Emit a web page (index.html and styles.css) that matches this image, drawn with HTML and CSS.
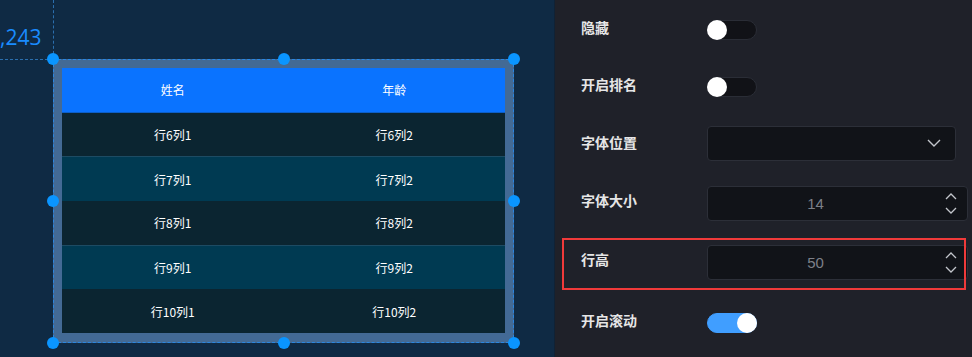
FILE: index.html
```html
<!DOCTYPE html>
<html lang="zh">
<head>
<meta charset="utf-8">
<link rel="stylesheet" href="styles.css">
</head>
<body>
<div class="app">
  <div class="canvas">
    <div class="guide-v"></div>
    <div class="guide-h"></div>
    <div class="coord">,243</div>
    <div class="widget">
      <div class="table">
        <div class="tr head"><div class="td">姓名</div><div class="td">年龄</div></div>
        <div class="tr dark"><div class="td">行6列1</div><div class="td">行6列2</div></div>
        <div class="tr light"><div class="td">行7列1</div><div class="td">行7列2</div></div>
        <div class="tr dark"><div class="td">行8列1</div><div class="td">行8列2</div></div>
        <div class="tr light"><div class="td">行9列1</div><div class="td">行9列2</div></div>
        <div class="tr dark"><div class="td">行10列1</div><div class="td">行10列2</div></div>
      </div>
      <span class="handle tl"></span><span class="handle tc"></span><span class="handle tr-h"></span>
      <span class="handle ml"></span><span class="handle mr"></span>
      <span class="handle bl"></span><span class="handle bc"></span><span class="handle br"></span>
    </div>
  </div>
  <div class="panel">
    <div class="row r1">
      <div class="label">隐藏</div>
      <div class="switch"><span class="knob"></span></div>
    </div>
    <div class="row r2">
      <div class="label">开启排名</div>
      <div class="switch"><span class="knob"></span></div>
    </div>
    <div class="row r3">
      <div class="label">字体位置</div>
      <div class="select">
        <svg class="chev" width="14" height="8" viewBox="0 0 14 8"><path d="M1 1 L7 7 L13 1" fill="none" stroke="#c3c6cc" stroke-width="1.4"/></svg>
      </div>
    </div>
    <div class="row r4">
      <div class="label">字体大小</div>
      <div class="number">
        <span class="val">14</span>
        <span class="arrows">
          <svg width="12" height="7" viewBox="0 0 12 7"><path d="M1 6 L6 1 L11 6" fill="none" stroke="#c3c6cc" stroke-width="1.3"/></svg>
          <svg width="12" height="7" viewBox="0 0 12 7"><path d="M1 1 L6 6 L11 1" fill="none" stroke="#c3c6cc" stroke-width="1.3"/></svg>
        </span>
      </div>
    </div>
    <div class="row r5">
      <div class="label">行高</div>
      <div class="number">
        <span class="val">50</span>
        <span class="arrows">
          <svg width="12" height="7" viewBox="0 0 12 7"><path d="M1 6 L6 1 L11 6" fill="none" stroke="#c3c6cc" stroke-width="1.3"/></svg>
          <svg width="12" height="7" viewBox="0 0 12 7"><path d="M1 1 L6 6 L11 1" fill="none" stroke="#c3c6cc" stroke-width="1.3"/></svg>
        </span>
      </div>
      <div class="highlight"></div>
    </div>
    <div class="row r6">
      <div class="label">开启滚动</div>
      <div class="switch on"><span class="knob"></span></div>
    </div>
  </div>
</div>
</body>
</html>
```

FILE: styles.css
```css
* { box-sizing: border-box; }
html, body { margin: 0; padding: 0; }
body {
  width: 972px;
  height: 357px;
  overflow: hidden;
  font-family: "Noto Sans CJK SC", "Noto Sans", sans-serif;
  background: #1f2129;
}
.app { display: flex; width: 972px; height: 357px; }

.canvas {
  position: relative;
  width: 556px;
  height: 357px;
  background: #0f2a44;
  border-right: 1px solid #102235;
  overflow: hidden;
}
.guide-v {
  position: absolute;
  left: 53px; top: 0;
  width: 0; height: 59px;
  border-left: 1px dashed #2b6fae;
}
.guide-h {
  position: absolute;
  left: 0; top: 59px;
  width: 53px; height: 0;
  border-top: 1px dashed #2b6fae;
}
.coord {
  position: absolute;
  left: 0; top: 22px;
  font-family: "Open Sans", "Noto Sans", sans-serif;
  font-size: 21px;
  line-height: 30px;
  color: #1a8cff;
}
.widget {
  position: absolute;
  left: 53px; top: 59px;
  width: 461px; height: 284px;
  background: #436a95;
  border: 1px dashed #2a86e0;
  padding: 8px 8px 9px 8px;
}
.table {
  display: flex;
  flex-direction: column;
  width: 100%;
  height: 100%;
}
.tr {
  flex: 1;
  display: flex;
}
.td {
  flex: 1;
  display: flex;
  align-items: center;
  justify-content: center;
  font-size: 12px;
  color: #ffffff;
}
.head { background: #0a73ff; border-bottom: 1px solid #0d5fc7; }
.dark { background: #0b2531; }
.light { background: #003a52; border-top: 1px solid #1d4b63; }

.handle {
  position: absolute;
  width: 12px; height: 12px;
  border-radius: 50%;
  background: #0a95ff;
}
.tl { left: -7px; top: -7px; }
.tc { left: 224px; top: -7px; }
.tr-h { right: -7px; top: -7px; }
.ml { left: -7px; top: 135px; }
.mr { right: -7px; top: 135px; }
.bl { left: -7px; bottom: -7px; }
.bc { left: 224px; bottom: -7px; }
.br { right: -7px; bottom: -7px; }

.panel {
  flex: 1;
  background: #1f2129;
  padding: 13px 4px 0 26px;
  display: flex;
  flex-direction: column;
}
.row {
  position: relative;
  display: flex;
  align-items: center;
  height: 34px;
}
.r2 { margin-top: 23px; }
.r3 { margin-top: 22px; }
.r4 { margin-top: 26px; }
.r5 { margin-top: 25px; }
.r6 { margin-top: 27px; }
.label {
  width: 126px;
  font-size: 14px;
  font-weight: 600;
  color: #e6e6e6;
  margin-top: -6px;
}
.r3 .label { margin-top: -3px; }
.switch {
  position: relative;
  width: 50px;
  height: 20px;
  border-radius: 10px;
  background: #111217;
  border: 1px solid #2a2d36;
}
.switch .knob {
  position: absolute;
  left: -1px; top: -1px;
  width: 20px; height: 20px;
  border-radius: 50%;
  background: #ffffff;
}
.switch.on { background: #409eff; border-color: #409eff; }
.switch.on .knob { left: auto; right: -1px; }

.select {
  width: 249px;
  height: 35px;
  border-radius: 4px;
  background: #111318;
  border: 1px solid #2c2f38;
  display: flex;
  align-items: center;
  justify-content: flex-end;
  padding-right: 14px;
}
.number {
  width: 261px;
  height: 35px;
  border-radius: 4px;
  background: #111318;
  border: 1px solid #2c2f38;
  display: flex;
  align-items: center;
  padding-right: 10px;
}
.number .val {
  flex: 1;
  text-align: center;
  margin-right: 22px;
  font-family: "Liberation Sans", "Noto Sans", sans-serif;
  font-size: 15px;
  color: #7d8088;
}
.arrows {
  display: flex;
  flex-direction: column;
  gap: 7px;
}
.arrows svg { display: block; }
.highlight {
  position: absolute;
  left: -19px; top: -7px;
  width: 404px; height: 52px;
  border: 2px solid #f03a3a;
  pointer-events: none;
}
```
